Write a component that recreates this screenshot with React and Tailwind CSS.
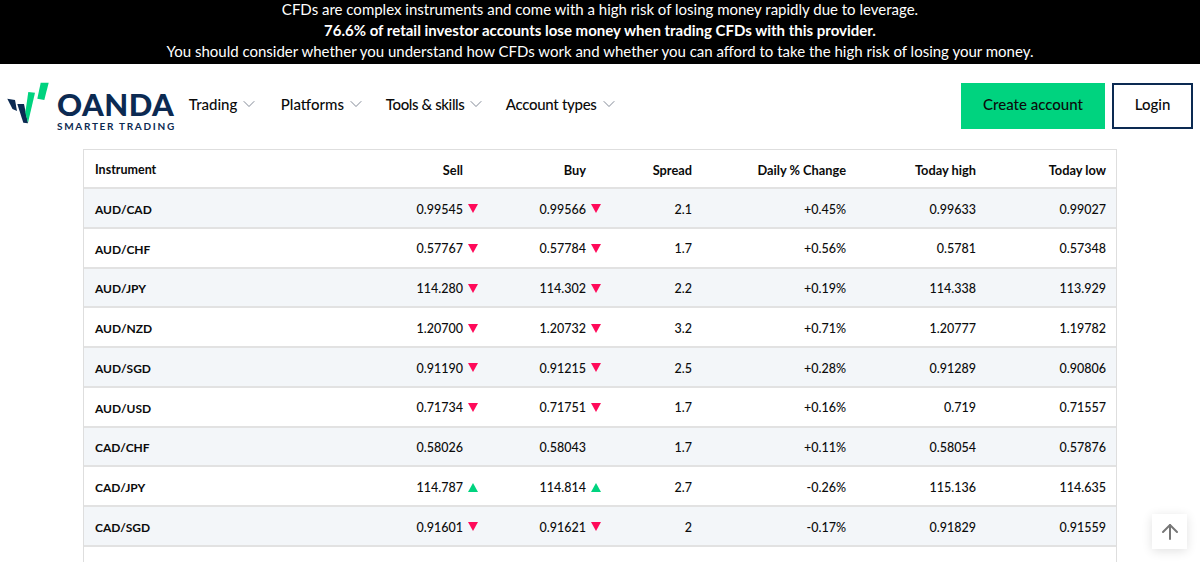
import { ChevronDown, ArrowUp } from 'lucide-react'

const rows = [
  { name: 'AUD/CAD', sell: '0.99545', buy: '0.99566', spread: '2.1', change: '+0.45%', high: '0.99633', low: '0.99027', dir: 'down' },
  { name: 'AUD/CHF', sell: '0.57767', buy: '0.57784', spread: '1.7', change: '+0.56%', high: '0.5781', low: '0.57348', dir: 'down' },
  { name: 'AUD/JPY', sell: '114.280', buy: '114.302', spread: '2.2', change: '+0.19%', high: '114.338', low: '113.929', dir: 'down' },
  { name: 'AUD/NZD', sell: '1.20700', buy: '1.20732', spread: '3.2', change: '+0.71%', high: '1.20777', low: '1.19782', dir: 'down' },
  { name: 'AUD/SGD', sell: '0.91190', buy: '0.91215', spread: '2.5', change: '+0.28%', high: '0.91289', low: '0.90806', dir: 'down' },
  { name: 'AUD/USD', sell: '0.71734', buy: '0.71751', spread: '1.7', change: '+0.16%', high: '0.719', low: '0.71557', dir: 'down' },
  { name: 'CAD/CHF', sell: '0.58026', buy: '0.58043', spread: '1.7', change: '+0.11%', high: '0.58054', low: '0.57876', dir: null },
  { name: 'CAD/JPY', sell: '114.787', buy: '114.814', spread: '2.7', change: '-0.26%', high: '115.136', low: '114.635', dir: 'up' },
  { name: 'CAD/SGD', sell: '0.91601', buy: '0.91621', spread: '2', change: '-0.17%', high: '0.91829', low: '0.91559', dir: 'down' },
]

const navItems = [
  { label: 'Trading', cls: 'w-[92px]' },
  { label: 'Platforms', cls: 'w-[105px]' },
  { label: 'Tools & skills', cls: 'w-[120px] tracking-[-0.4px]' },
  { label: 'Account types', cls: 'w-[120px] tracking-[-0.3px]' },
]

function Arrow({ dir }) {
  return (
    <span className="w-[10px] ml-[5px] -mt-[2px] shrink-0 flex items-center">
      {dir === 'down' && (
        <svg width="10" height="9" viewBox="0 0 10 9"><path d="M0 0h10L5 9z" fill="#ff0a5a" /></svg>
      )}
      {dir === 'up' && (
        <svg width="10" height="9" viewBox="0 0 10 9"><path d="M0 9h10L5 0z" fill="#00d37f" /></svg>
      )}
    </span>
  )
}

function Logo() {
  return (
    <div className="flex items-start">
      <svg width="44" height="44" viewBox="0 0 44 44" className="mt-[18px] ml-[7px] shrink-0">
        <path d="M0.3 16.7 L8 18 L10 29 L5.5 27 Z" fill="#0c2a52" />
        <path d="M10.3 22 L17 22 L21 41.3 L16.3 40.7 Z" fill="#0c2a52" />
        <path d="M21.3 10 L28 10.7 L21 40.7 L18.3 30.7 Z" fill="#00d37f" />
        <path d="M33.7 0.7 L41.7 0.7 L37.3 18 L30.3 16.7 Z" fill="#00d37f" />
      </svg>
      <div className="ml-[6px] mt-[25px] text-[#0c2a52]">
        <div className="text-[31px] leading-[31px] font-black tracking-[0.5px]">OANDA</div>
        <div className="text-[10px] leading-[12px] font-bold tracking-[1.7px] whitespace-nowrap">SMARTER TRADING</div>
      </div>
    </div>
  )
}

function Cell({ className = '', children }) {
  return <div className={`flex items-center justify-end pr-3 pt-[4px] ${className}`}>{children}</div>
}

export default function App() {
  return (
    <div className="h-[562px] overflow-hidden bg-white text-[#0b0b0b] font-['Lato','Noto_Sans',sans-serif]">
      {/* risk warning */}
      <div className="h-[64px] overflow-hidden bg-black text-white text-center text-[15px] leading-[21px]">
        <p className="-mt-[1px]">CFDs are complex instruments and come with a high risk of losing money rapidly due to leverage.</p>
        <p className="font-bold">76.6% of retail investor accounts lose money when trading CFDs with this provider.</p>
        <p>You should consider whether you understand how CFDs work and whether you can afford to take the high risk of losing your money.</p>
      </div>

      {/* nav */}
      <div className="h-[85px] flex items-start">
        <Logo />
        <nav className="flex ml-[13px] mt-[30px] text-[15px] leading-[20px] font-medium">
          {navItems.map(item => (
            <div key={item.label} className={`flex items-center ${item.cls}`}>
              <span>{item.label}</span>
              <ChevronDown size={20} strokeWidth={1} className="ml-[2px] text-gray-500" />
            </div>
          ))}
        </nav>
        <div className="ml-auto flex mt-[19px] mr-[7px] gap-[7px] text-[15px] font-medium">
          <div className="w-[144px] h-[46px] pb-[3px] bg-[#00d37f] flex items-center justify-center">Create account</div>
          <div className="w-[81px] h-[46px] pb-[3px] border-2 border-[#0c2a52] flex items-center justify-center">Login</div>
        </div>
      </div>

      {/* instruments table */}
      <div className="ml-[83px] w-[1034px] border border-[#dedede] text-[12.5px] font-medium">
        <div className="grid grid-cols-[216px_190px_123px_91px_154px_130px_1fr] h-[39px] items-stretch border-b-2 border-[#e2e2e2] font-bold text-[12.8px]">
          <div className="flex items-center pl-[11px] pt-[4px] text-[12.5px]">Instrument</div>
          <Cell className="pr-[27px]">Sell</Cell>
          <Cell className="pr-[27px]">Buy</Cell>
          <Cell>Spread</Cell>
          <Cell>Daily % Change</Cell>
          <Cell>Today high</Cell>
          <Cell className="pr-[10px]">Today low</Cell>
        </div>
        {rows.map((r, i) => (
          <div
            key={r.name}
            className={`grid grid-cols-[216px_190px_123px_91px_154px_130px_1fr] h-[39.75px] items-stretch border-b-2 border-[#e2e2e2] ${i % 2 === 0 ? 'bg-[#f3f6f9]' : 'bg-white'}`}
          >
            <div className="flex items-center pl-[11px] pt-[4px] font-bold text-[12px]">{r.name}</div>
            <Cell>{r.sell}<Arrow dir={r.dir} /></Cell>
            <Cell>{r.buy}<Arrow dir={r.dir} /></Cell>
            <Cell>{r.spread}</Cell>
            <Cell>{r.change}</Cell>
            <Cell>{r.high}</Cell>
            <Cell className="pr-[10px]">{r.low}</Cell>
          </div>
        ))}
        <div className="h-[40px]" />
      </div>

      {/* back to top */}
      <div className="fixed left-[1152px] top-[514px] w-[35px] h-[35px] bg-white shadow-[0_2px_10px_rgba(0,0,0,0.12)] flex items-center justify-center">
        <ArrowUp size={24} strokeWidth={2} className="text-[#777777]" />
      </div>
    </div>
  )
}
